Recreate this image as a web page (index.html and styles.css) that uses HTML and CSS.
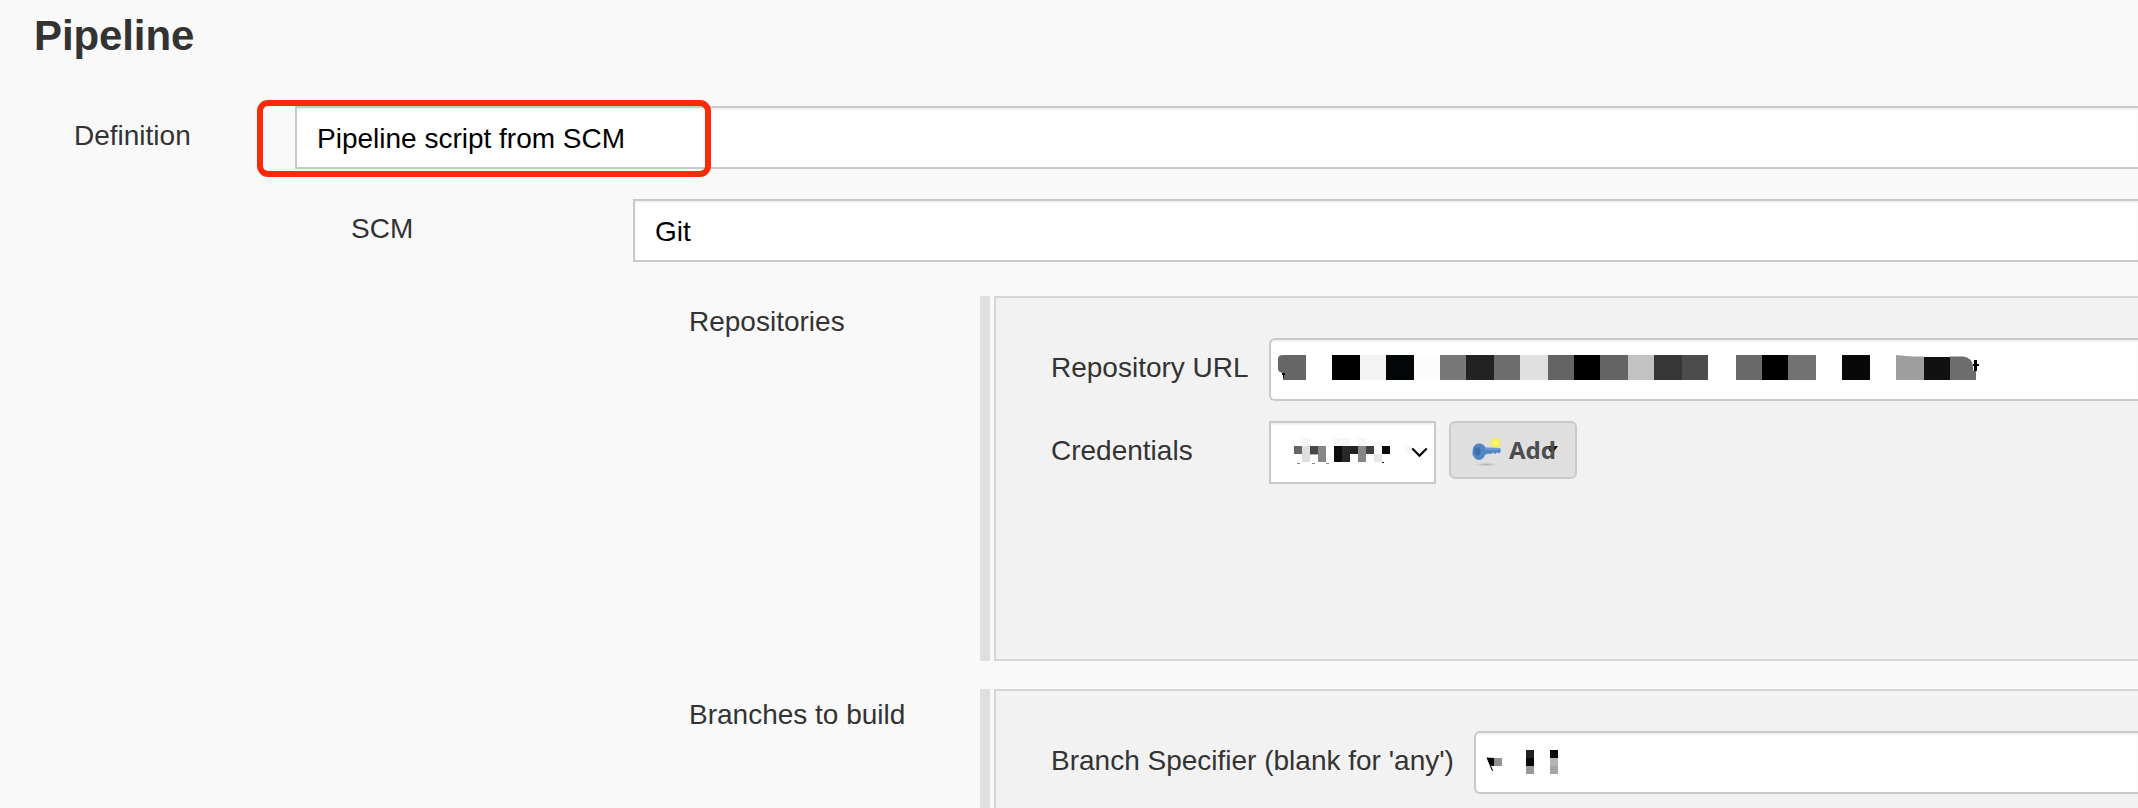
FILE: index.html
```html
<!DOCTYPE html>
<html lang="en">
<head>
<meta charset="utf-8">
<title>Pipeline</title>
<link rel="stylesheet" href="styles.css">
</head>
<body>
<main class="config">
  <h1 class="title">Pipeline</h1>

  <div class="row row-definition">
    <div class="label">Definition</div>
    <div class="select">Pipeline script from SCM</div>
    <div class="highlight"></div>
  </div>

  <div class="row row-scm">
    <div class="label">SCM</div>
    <div class="select">Git</div>
  </div>

  <div class="row row-repos">
    <div class="label">Repositories</div>
    <div class="handle"></div>
    <div class="panel">
      <div class="field">
        <div class="label">Repository URL</div>
        <div class="input">
          <svg class="mosaic" width="720" height="59" viewBox="1271 340 720 59" shape-rendering="crispEdges">
            <path fill="#666" shape-rendering="auto" d="M1306 355V380H1283V373Q1278 372 1278 369V359Q1278 355 1283 355Z"/>
            <path d="M1282 373h3v2h-1v3h-1v-3h-1z"/>
            <path fill="#000" d="M1332 355h28v25h-28zM1574 355h26v25h-26zM1762 355h26v25h-26z"/>
            <path fill="#f3f3f3" d="M1360 355h26v25h-26z"/>
            <path fill="#030606" d="M1386 355h28v25h-28z"/>
            <path fill="#fcfcfc" d="M1414 355h26v25h-26z"/>
            <path fill="#787878" d="M1440 355h26v25h-26z"/>
            <path fill="#222" d="M1466 355h28v25h-28z"/>
            <path fill="#6d6d6d" d="M1494 355h26v25h-26z"/>
            <path fill="#e0e0e0" d="M1520 355h28v25h-28z"/>
            <path fill="#646464" d="M1548 355h26v25h-26zM1600 355h28v25h-28z"/>
            <path fill="#c2c2c2" d="M1628 355h26v25h-26z"/>
            <path fill="#363636" d="M1654 355h28v25h-28z"/>
            <path fill="#4c4c4c" d="M1682 355h26v25h-26z"/>
            <path fill="#6a6a6a" d="M1736 355h26v25h-26z"/>
            <path fill="#727272" d="M1788 355h28v25h-28z"/>
            <path fill="#080808" d="M1842 355h28v25h-28z"/>
            <path fill="#9e9e9e" shape-rendering="auto" d="M1896 355L1912 356.500H1924V380H1896z"/>
            <path fill="#111" d="M1924 357h26v23h-26z"/>
            <path fill="#6d6d6d" shape-rendering="auto" d="M1950 356.500h13q9 1 10 10v4h3V380h-26z"/>
            <path d="M1974 360h3v4h2v2h-2v5h-3v-5h-1v-2h1z"/>
          </svg>
        </div>
      </div>
      <div class="field field-credentials">
        <div class="label">Credentials</div>
        <div class="select select-small">
          <svg class="mosaic" width="163" height="59" viewBox="1271 423 163 59" shape-rendering="crispEdges">
            <path fill="#f6f6f6" d="M1302 438h8v8h-8zM1334 438h16v8h-16zM1358 438h8v8h-8zM1406 446h6v8h-6z"/>
            <path fill="#666" d="M1294 446h8v8h-8z"/>
            <path fill="#dedede" d="M1302 446h8v16h-8z"/>
            <path fill="#484848" d="M1310 446h8v8h-8z"/>
            <path fill="#aaa" d="M1310 454h8v1h-8z"/>
            <path fill="#868686" d="M1318 446h8v16h-8zM1358 446h8v16h-8z"/>
            <path fill="#0c0c0c" d="M1334 446h8v16h-8zM1382 446h8v8h-8z"/>
            <path fill="#282828" d="M1342 446h8v16h-8z"/>
            <path fill="#222" d="M1350 446h8v8h-8z"/>
            <path fill="#404040" d="M1366 446h8v8h-8z"/>
            <path fill="#e8e8e8" d="M1374 454h8v8h-8z"/>
            <path fill="#888" d="M1297 463h3v1h-3zM1312 463h3v1h-3zM1326 463h3v1h-3z"/>
            <path d="M1382 462h2v1h-2z"/>
            <path class="chevron" d="M1412.300 448.500l7.200 7.200 7.200-7.200"/>
          </svg>
        </div>
        <div class="button">
          <svg class="key" width="32" height="36" viewBox="0 0 32 36">
            <defs>
              <radialGradient id="glow"><stop offset="0" stop-color="#fffb7c"/><stop offset=".7" stop-color="#f5ee55"/><stop offset="1" stop-color="#eee86c" stop-opacity="0"/></radialGradient>
              <radialGradient id="shade"><stop offset="0" stop-color="#aaa"/><stop offset="1" stop-color="#ccc" stop-opacity="0"/></radialGradient>
            </defs>
            <ellipse cx="15" cy="32.500" rx="13" ry="2" fill="url(#shade)"/>
            <circle cx="24.500" cy="11" r="6" fill="url(#glow)"/>
            <path fill="#5285c5" d="M2 16Q4 11 9 11.500 13 12 14.500 15.500L29 16 30 19 28 21.500 26 20.500 24 22 22 20.500 20 22 17 21.500 14 23Q12 28 7.500 28 4 27.500 3 25 1 23 1.500 20z"/>
            <path fill="#7eabdc" d="M14 16.500h14.500v1.200H14z"/>
            <ellipse cx="6.500" cy="19.500" rx="3" ry="4" fill="#3f6da8"/>
          </svg>
          <svg class="caret" width="12" height="8" viewBox="0 0 12 8"><path d="M0 0h12L6 8z"/></svg>
          <span class="button-text">Add</span>
        </div>
      </div>
    </div>
  </div>

  <div class="row row-branches">
    <div class="label">Branches to build</div>
    <div class="handle"></div>
    <div class="panel">
      <div class="field field-branch">
        <div class="label">Branch Specifier (blank for 'any')</div>
        <div class="input">
          <svg class="mosaic" width="100" height="59" viewBox="1476 733 100 59" shape-rendering="crispEdges">
            <path shape-rendering="auto" d="M1486.500 757.500L1494 758V766H1491L1493.500 771.500 1491.500 770z"/>
            <path fill="#909090" d="M1494 758h8v8h-8z"/>
            <path fill="#222" d="M1526 750h8v8h-8z"/>
            <path fill="#080808" d="M1526 758h8v8h-8zM1550 750h8v8h-8z"/>
            <path fill="#999" d="M1526 766h8v8h-8z"/>
            <path fill="#b5b5b5" d="M1550 758h8v8h-8z"/>
            <path fill="#a6a6a6" d="M1550 766h8v8h-8z"/>
          </svg>
        </div>
      </div>
    </div>
  </div>
</main>
</body>
</html>
```

FILE: styles.css
```css
* { box-sizing: border-box; }

body {
  margin: 0;
  overflow: hidden;
  background: #f9f9f9;
  color: #333;
  font: 28px/32px "Liberation Sans", Arial, sans-serif;
}

.config {
  height: 808px;
  overflow: hidden;
  padding-top: 12px;
}

.title {
  margin: 0 0 46px 34px;
  font-size: 42px;
  line-height: 48px;
  font-weight: bold;
  letter-spacing: -0.1px;
}

.row {
  display: flex;
  align-items: flex-start;
  position: relative;
}

.label {
  flex: none;
  white-space: nowrap;
  padding-top: 14px;
}

.select,
.input {
  flex: 1;
  height: 63px;
  border: 2px solid #c9c9c9;
  border-right: 0;
  background: #fff;
  box-shadow: inset 0 2px 2px #f1f1f1;
}

.select {
  padding: 15px 20px 0;
  color: #000;
}

.input { border-radius: 6px 0 0 6px; }

.row-definition { height: 63px; margin-bottom: 30px; padding-left: 74px; }
.row-definition .label { width: 221px; }

.highlight {
  position: absolute;
  left: 257px;
  top: -6px;
  width: 454px;
  height: 77px;
  border: 6px solid #fb2b09;
  border-radius: 11px;
}

.row-scm { height: 63px; margin-bottom: 34px; padding-left: 351px; }
.row-scm .label { width: 282px; }

.row-repos,
.row-branches { align-items: stretch; padding-left: 689px; }
.row-repos > .label,
.row-branches > .label { width: 291px; padding-top: 10px; }
.row-repos { height: 365px; margin-bottom: 28px; }
.row-branches { height: 200px; }

.handle { flex: none; width: 10px; margin-right: 4px; background: #dfdfdf; }

.panel {
  flex: 1;
  border: 2px solid #d6d6d6;
  border-right: 0;
  background: #f2f2f2;
  padding: 40px 0 0 55px;
}

.field { display: flex; align-items: flex-start; }
.field .label { width: 218px; }
.field-credentials { margin-top: 20px; }
.field-branch .label { width: 423px; }

.select-small {
  flex: none;
  width: 167px;
  border-right: 2px solid #c9c9c9;
  padding: 0;
}

.mosaic { display: block; }

.chevron { fill: none; stroke: #000; stroke-width: 2.2; shape-rendering: auto; }

.button {
  position: relative;
  display: flex;
  align-items: center;
  width: 128px;
  height: 58px;
  margin-left: 13px;
  padding-left: 20px;
  border: 2px solid #c9c9c9;
  border-radius: 6px;
  background: #dfdfdf;
  color: #4d4d4d;
}

.key { flex: none; }
.button-text { position: relative; margin-left: 6px; font: bold 24px/30px "Noto Sans", sans-serif; }
.caret { position: absolute; left: 95px; top: 23px; }
```
